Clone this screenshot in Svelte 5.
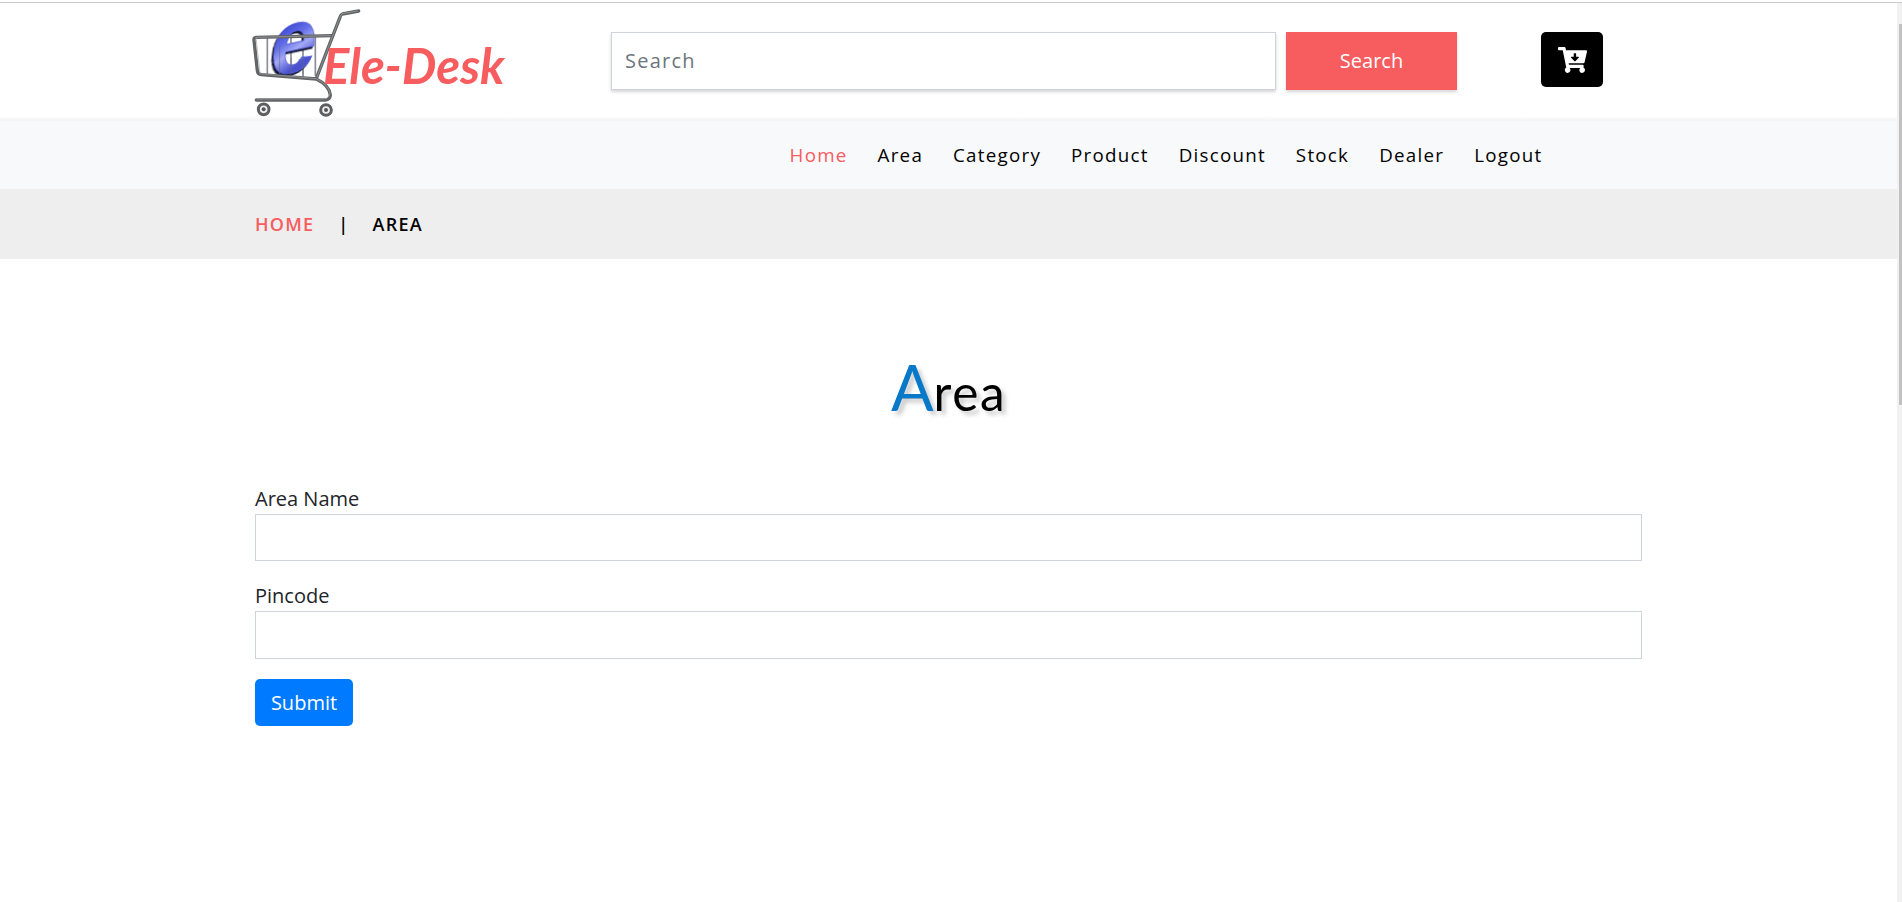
<script>
  const links = ['Home', 'Area', 'Category', 'Product', 'Discount', 'Stock', 'Dealer', 'Logout'];
  const fields = ['Area Name', 'Pincode'];
</script>

<div class="window">
  <div class="page">
    <header>
      <a class="logo" href="#home" aria-label="Ele-Desk">
        <svg class="cart" viewBox="36 27 327 327" fill="none" stroke-linecap="round" stroke-linejoin="round">
          <defs>
            <linearGradient id="blue" x1="0" y1="0" x2="0.25" y2="1">
              <stop offset="0.35" stop-color="#3540cc" />
              <stop offset="0.55" stop-color="#6470e8" />
              <stop offset="0.68" stop-color="#a3a8f6" />
              <stop offset="0.85" stop-color="#4a52cf" />
            </linearGradient>
          </defs>
          <g stroke="#8b8c98" stroke-width="5">
            <path d="M82 113v110M119 112v112M153 112v116M189 111v122M226 110v116" />
          </g>
          <text class="mark" transform="translate(83 232) rotate(-12) skewX(-19) scale(1.1 1.14)" x="0" y="0" fill="url(#blue)" stroke="#5963d8" stroke-width="2">e</text>
          <g stroke="#686a70" stroke-width="3" opacity=".55">
            <path d="M119 140v82M153 175v50M189 175v48" />
          </g>
          <g stroke="#626466" stroke-width="10">
            <path d="M356 33l-49 9q-4 1-6 7l-72 186" />
            <path d="M277 107L48 112q-7 1-6 9l10 91q1 11 12 12l165 13q39 19 42 48-1 14-15 15H49" />
          </g>
          <g stroke="#a2a4a6" stroke-width="2">
            <path d="M352 33l-46 8-5 8-70 182M272 107L48 112l12 109 168 15q36 17 42 43-2 17-19 18H50" />
          </g>
          <g stroke="#5d5e60" stroke-width="9">
            <circle cx="71" cy="328" r="16" fill="#eee" />
            <circle cx="258" cy="330" r="16" fill="#eee" />
          </g>
          <g fill="#555"><circle cx="71" cy="328" r="6" /><circle cx="258" cy="330" r="6" /></g>
        </svg>
        <span>Ele-Desk</span>
      </a>
      <form class="search" onsubmit={(e) => e.preventDefault()}>
        <input type="search" placeholder="Search" />
        <button type="submit">Search</button>
      </form>
      <button class="basket" aria-label="Cart">
        <svg viewBox="0 0 576 512" fill="#fff">
          <path d="M504.717 320H211.572l6.545 32h268.418c15.401 0 26.816 14.301 23.403 29.319l-5.517 24.276C523.112 414.668 536 433.828 536 456c0 31.202-25.519 56.444-56.824 55.994-29.823-.429-54.35-24.631-55.155-54.447-.44-16.287 6.085-31.049 16.803-41.548H231.176C241.553 426.165 248 440.326 248 456c0 31.813-26.528 57.431-58.67 55.938-28.54-1.325-51.751-24.385-53.251-52.917-1.158-22.034 10.436-41.455 28.051-51.586L93.883 64H24C10.745 64 0 53.255 0 40V24C0 10.745 10.745 0 24 0h102.529c11.401 0 21.228 8.021 23.513 19.19L159.208 64H551.99c15.401 0 26.816 14.301 23.403 29.319l-47.273 208C525.637 312.246 515.923 320 504.717 320zM403.029 192H360v-60c0-6.627-5.373-12-12-12h-24c-6.627 0-12 5.373-12 12v60h-43.029c-10.691 0-16.045 12.926-8.485 20.485l67.029 67.029c4.686 4.686 12.284 4.686 16.971 0l67.029-67.029c7.559-7.559 2.205-20.485-8.486-20.485z" />
        </svg>
      </button>
    </header>

    <nav>
      {#each links as link, i}
        <a class:active={i === 0} href="#{link.toLowerCase()}">{link}</a>
      {/each}
    </nav>

    <div class="crumbs">
      <a href="#home">HOME</a><span class="bar">|</span><span>AREA</span>
    </div>

    <main>
      <h3><span>A</span>rea</h3>
      <form onsubmit={(e) => e.preventDefault()}>
        {#each fields as field}
          <label>{field}<input type="text" /></label>
        {/each}
        <button class="submit" type="submit">Submit</button>
      </form>
    </main>
  </div>
  <div class="scroll"><div class="thumb"></div></div>
</div>

<style>
  :global(body) { margin: 0; background: #fff; overflow: hidden; }
  .window, .window * { box-sizing: border-box; }
  .window {
    display: flex;
    height: 902px;
    border-top: 1px solid #fff;
    padding-top: 2px;
    background: linear-gradient(#fff 0 1px, #ccc 1px 2px, #fff 2px);
    font-family: "Open Sans", sans-serif;
    font-size: 20px;
    color: #212529;
  }
  button, input { font: inherit; margin: 0; }
  a { text-decoration: none; }
  .page { flex: 1; min-width: 0; }
  .scroll { width: 5px; background: #f1f1f1; padding: 21px 0 0 2px; }
  .thumb { height: 381px; background: #c1c1c1; }

  header {
    display: flex;
    align-items: flex-start;
    height: 118px;
    padding-left: 252px;
    background: linear-gradient(#fff 0 113px, #f3f3f3);
  }
  .logo { display: flex; width: 359px; padding-top: 6px; }
  .cart { width: 109px; height: 109px; flex: none; overflow: visible; }
  .mark { font: 700 232px "Liberation Sans", sans-serif; filter: drop-shadow(-4px 5px 0 #10122c); }
  .logo span {
    margin: 27px 0 0 -38px;
    font: italic 700 49px/58px Lato, sans-serif;
    color: #f75c5f;
    white-space: nowrap;
  }
  .search { display: flex; gap: 10px; padding-top: 29px; }
  .search input {
    width: 665px;
    height: 58px;
    padding: 0 13px 2px;
    border: 1px solid #ced4da;
    border-radius: 0;
    outline: none;
    letter-spacing: 1.25px;
    box-shadow: 0 2px 3px rgba(0, 0, 0, .17);
  }
  .search input::placeholder { color: #6c757d; opacity: 1; }
  .search button {
    width: 171px;
    height: 58px;
    padding: 0 0 2px;
    border: 0;
    background: #f75c5f;
    color: #fff;
    box-shadow: 0 2px 3px rgba(0, 0, 0, .17);
  }
  .basket {
    display: grid;
    place-items: center;
    width: 62px;
    height: 55px;
    margin: 29px 0 0 84px;
    padding: 0;
    border: 0;
    border-radius: 5px;
    background: #000;
  }
  .basket svg { width: 29px; height: 26px; }

  nav {
    display: flex;
    gap: 30px;
    height: 68px;
    padding-left: 789.6px;
    background: #f8f9fb;
    font-size: 18.75px;
    line-height: 68px;
    letter-spacing: 1.25px;
  }
  nav a { color: #000; }
  nav a.active { color: #f75c5f; }

  .crumbs {
    display: flex;
    height: 70px;
    padding-left: 255px;
    background: #eee;
    color: #000;
    font-size: 18px;
    font-weight: 600;
    line-height: 70px;
    letter-spacing: 1.25px;
  }
  .crumbs a { color: #f75c5f; }
  .bar { margin: 0 23px 0 24px; }

  main { padding: 88px 255px 0; }
  h3 {
    margin: 0;
    height: 137px;
    font: 400 49.5px/80px Lato, sans-serif;
    letter-spacing: 1.6px;
    color: #000;
    text-align: center;
    text-shadow: 4px 4px 4px rgba(0, 0, 0, .2);
  }
  h3 span { font-size: 63px; letter-spacing: 0; color: #0879c9; }
  label { display: block; height: 97px; line-height: 30px; }
  label + label { height: 98px; }
  main input {
    display: block;
    width: 100%;
    height: 47px;
    border: 1px solid #ced4da;
    border-radius: 0;
    outline: none;
  }
  label + label input { height: 48px; }
  .submit {
    display: block;
    width: 98px;
    height: 47px;
    padding: 0;
    border: 0;
    border-radius: 5px;
    background: #007bff;
    color: #fff;
  }
</style>
